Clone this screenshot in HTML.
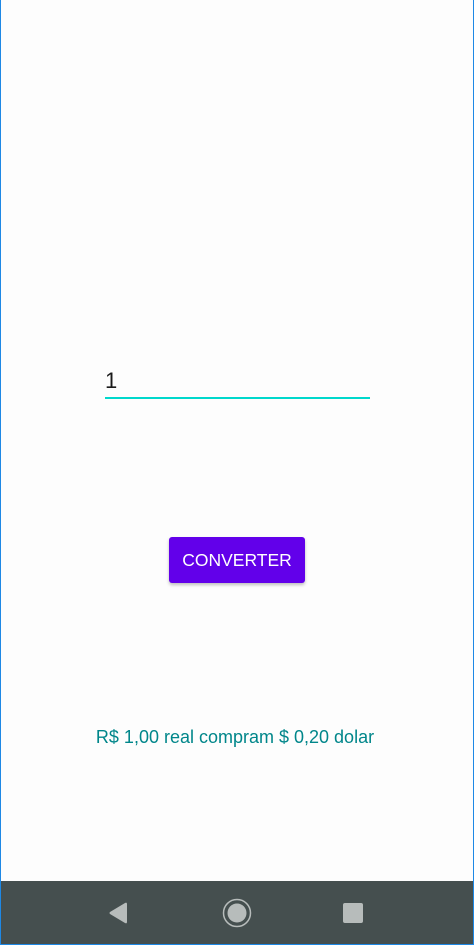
<!DOCTYPE html>
<html><head><style>
html,body{margin:0;padding:0}
body{width:474px;height:945px;position:relative;background:#fdfdfd;font-family:"Liberation Sans",sans-serif;overflow:hidden}
.frame{position:absolute;left:0;top:0;width:472px;height:944px;border-left:1px solid #1e88e5;border-right:1px solid #1e88e5;border-bottom:1px solid #1e88e5}
.inp{position:absolute;left:105px;top:368px;font-size:22px;color:#1a1a1a}
.line{position:absolute;left:105px;top:397px;width:265px;height:2px;background:#00d8cc}
.btn{position:absolute;left:169px;top:537px;width:136px;height:46px;background:#6200ea;border-radius:3px;color:#fff;font-size:17.5px;line-height:47px;text-align:center;box-shadow:0 2px 3px rgba(0,0,0,.25)}
.res{position:absolute;left:0;width:470px;top:727px;text-align:center;color:#00868a;font-size:18px}
.nav{position:absolute;left:1px;top:881px;width:472px;height:63px;background:#454f4f}
</style></head><body>
<div class="inp">1</div>
<div class="line"></div>
<div class="btn">CONVERTER</div>
<div class="res">R$ 1,00 real compram $ 0,20 dolar</div>
<div class="nav">
<svg width="472" height="63" style="position:absolute;left:-1px;top:0">
<path d="M127 23 L127 41 Q127 43 125 42 L110 33 Q109 32 110 31 L125 22 Q127 21 127 23Z" fill="#b7bcbb"/>
<circle cx="237" cy="32" r="13.5" fill="none" stroke="#b7bcbb" stroke-width="1.5"/>
<circle cx="237" cy="32" r="9.5" fill="#b7bcbb"/>
<rect x="343" y="22" width="20" height="20" rx="2" fill="#b7bcbb"/>
</svg>
</div>
<div class="frame"></div>
</body></html>
